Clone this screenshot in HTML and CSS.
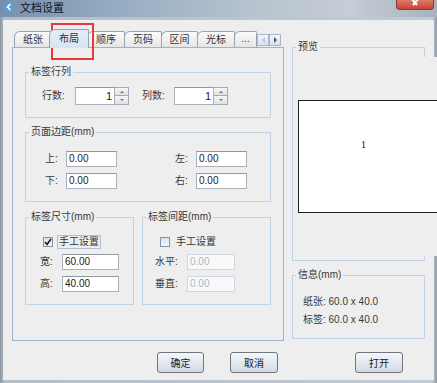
FILE: index.html
```html
<!DOCTYPE html>
<html lang="zh-CN">
<head>
    <meta charset="UTF-8">
    <meta name="viewport" content="width=device-width, initial-scale=1.0">
    <title>文档设置</title>
    <link rel="stylesheet" href="styles.css">
</head>
<body>

<div class="window">
    <div class="titlebar">
        <svg class="app-icon" width="12" height="12" viewBox="0 0 12 12">
            <path d="M6 0.5 L11.5 6 L6 11.5 L0.5 6 Z" fill="#4fa3e3"/>
            <path d="M7.5 3 L4.5 6 L7.5 9" stroke="#fff" stroke-width="1.6" fill="none"/>
        </svg>
        <span class="title">文档设置</span>
        <div class="close-btn">
            <svg width="12" height="10" viewBox="0 0 12 10">
                <path d="M2 -2 L8 5 M10 -2 L4 5" stroke="#fff" stroke-width="2"/>
            </svg>
        </div>
    </div>

    <div class="client">
        <div class="main">
            <div class="tabs">
                <div class="tab-strip">
                    <div class="tab">纸张</div>
                    <div class="tab selected">布局</div>
                    <div class="tab">顺序</div>
                    <div class="tab">页码</div>
                    <div class="tab narrow">区间</div>
                    <div class="tab">光标</div>
                    <div class="tab more">...</div>
                    <div class="tab-scroll">
                        <span class="scroll-btn"><i class="tri tri-left"></i></span>
                        <span class="scroll-btn"><i class="tri tri-right"></i></span>
                    </div>
                </div>

                <div class="tab-panel">
                    <fieldset class="group rows-group">
                        <legend>标签行列</legend>
                        <div class="spin-row">
                            <span class="lbl lbl-rows">行数:</span>
                            <div class="spinner">
                                <span class="field num">1</span>
                                <span class="spin-btns">
                                    <span class="spin-btn"><i class="tri tri-up"></i></span>
                                    <span class="spin-btn"><i class="tri tri-down"></i></span>
                                </span>
                            </div>
                            <span class="lbl lbl-cols">列数:</span>
                            <div class="spinner">
                                <span class="field num">1</span>
                                <span class="spin-btns">
                                    <span class="spin-btn"><i class="tri tri-up"></i></span>
                                    <span class="spin-btn"><i class="tri tri-down"></i></span>
                                </span>
                            </div>
                        </div>
                    </fieldset>

                    <fieldset class="group margins-group">
                        <legend>页面边距(mm)</legend>
                        <div class="margin-row first">
                            <div class="pair"><span class="lbl lbl-side">上:</span><span class="field w50">0.00</span></div>
                            <div class="pair"><span class="lbl lbl-side">左:</span><span class="field w50">0.00</span></div>
                        </div>
                        <div class="margin-row">
                            <div class="pair"><span class="lbl lbl-side">下:</span><span class="field w50">0.00</span></div>
                            <div class="pair"><span class="lbl lbl-side">右:</span><span class="field w50">0.00</span></div>
                        </div>
                    </fieldset>

                    <div class="group-pair">
                        <fieldset class="group size-group">
                            <legend>标签尺寸(mm)</legend>
                            <div class="check-row">
                                <span class="checkbox">
                                    <svg width="8" height="8" viewBox="0 0 8 8">
                                        <path d="M1 4 L3 6.5 L7 1" stroke="#1a1a1a" stroke-width="1.6" fill="none"/>
                                    </svg>
                                </span>
                                <span class="check-label focused">手工设置</span>
                            </div>
                            <div class="field-row first">
                                <span class="lbl lbl-size">宽:</span><span class="field w57">60.00</span>
                            </div>
                            <div class="field-row">
                                <span class="lbl lbl-size">高:</span><span class="field w57">40.00</span>
                            </div>
                        </fieldset>

                        <fieldset class="group gap-group">
                            <legend>标签间距(mm)</legend>
                            <div class="check-row">
                                <span class="checkbox"></span>
                                <span class="check-label">手工设置</span>
                            </div>
                            <div class="field-row first">
                                <span class="lbl lbl-gap">水平:</span><span class="field w48 disabled">0.00</span>
                            </div>
                            <div class="field-row">
                                <span class="lbl lbl-gap">垂直:</span><span class="field w48 disabled">0.00</span>
                            </div>
                        </fieldset>
                    </div>
                </div>
            </div>

            <div class="side">
                <fieldset class="group preview-group">
                    <legend>预览</legend>
                    <div class="canvas">
                        <div class="label-sheet">1</div>
                    </div>
                </fieldset>

                <fieldset class="group info-group">
                    <legend>信息(mm)</legend>
                    <div class="info-line first">纸张: 60.0 x 40.0</div>
                    <div class="info-line">标签: 60.0 x 40.0</div>
                </fieldset>
            </div>
        </div>

        <div class="buttons">
            <button class="btn btn-ok">确定</button>
            <button class="btn btn-cancel">取消</button>
            <button class="btn btn-open">打开</button>
        </div>
    </div>
</div>

<div class="highlight"></div>

</body>
</html>
```

FILE: styles.css
```css
html, body {
    margin: 0;
    padding: 0;
}

body {
    width: 437px;
    height: 383px;
    overflow: hidden;
    position: relative;
    font-family: "Liberation Sans", "Noto Sans CJK SC", sans-serif;
    font-size: 10px;
    color: #333333;
}

.window {
    height: 383px;
    box-sizing: border-box;
    padding: 0 3px 3px 3px;
    background: linear-gradient(to right, #8c97a3, #b4bec9 1%, #c2cad3 99%, #8c97a3);
    display: flex;
    flex-direction: column;
}

/* title bar */
.titlebar {
    height: 17px;
    margin: 0 -3px 3px -3px;
    display: flex;
    align-items: flex-start;
    background: linear-gradient(to right, #7890ad, #9aafc4 30%, #b9c4cf 60%, #c5cdd6 80%, #a5b2bf);
}

.app-icon {
    margin: 1px 0 0 3px;
}

.title {
    margin-left: 5px;
    font-family: "Noto Sans CJK SC", sans-serif;
    font-size: 11px;
    line-height: 14px;
    color: #111111;
}

.close-btn {
    margin-left: auto;
    margin-right: 3px;
    width: 36px;
    height: 9px;
    border: 1px solid #8a3a34;
    border-top: none;
    border-radius: 0 0 4px 4px;
    background: linear-gradient(#e07a6c, #c94331);
    display: flex;
    justify-content: center;
}

/* client area */
.client {
    flex: 1;
    background: #eeeeee;
    padding: 8px 0 0 9px;
}

.main {
    display: flex;
    align-items: flex-start;
    gap: 8px;
}

.tabs {
    width: 272px;
}

.tab-strip {
    height: 19px;
    display: flex;
    align-items: flex-end;
    padding-left: 2px;
}

.tab {
    width: 38px;
    height: 16px;
    box-sizing: border-box;
    border: 1px solid #98a4b2;
    border-bottom: none;
    border-radius: 6px 2px 0 0;
    background: linear-gradient(#fbfbfb, #e6e6e6);
    text-align: center;
    line-height: 15px;
    color: #333333;
    margin-right: -1px;
}

.tab.selected {
    width: 40px;
    height: 19px;
    margin: 0 -2px -1px -2px;
    position: relative;
    z-index: 1;
    border-color: #8fa4be;
    background: linear-gradient(#e3edf8, #d6e4f3);
    line-height: 17px;
}

.tab.narrow {
    width: 37px;
}

.tab.more {
    width: 23px;
    line-height: 14px;
}

.tab-scroll {
    display: flex;
    margin: 0 0 1px 1px;
}

.scroll-btn {
    width: 12px;
    height: 12px;
    box-sizing: border-box;
    border: 1px solid #aab7c6;
    background: linear-gradient(#f3f7fb, #d7e2ee);
    display: flex;
    align-items: center;
    justify-content: center;
}

.tri {
    width: 0;
    height: 0;
    display: block;
}

.tri-left {
    border-top: 3px solid transparent;
    border-bottom: 3px solid transparent;
    border-right: 3px solid #b7c5d4;
}

.tri-right {
    border-top: 3px solid transparent;
    border-bottom: 3px solid transparent;
    border-left: 3px solid #4d5866;
}

.tri-up {
    border-left: 2px solid transparent;
    border-right: 2px solid transparent;
    border-bottom: 2px solid #6b7580;
}

.tri-down {
    border-left: 2px solid transparent;
    border-right: 2px solid transparent;
    border-top: 2px solid #6b7580;
}

.tab-panel {
    height: 294px;
    box-sizing: border-box;
    border: 1px solid #9db3cd;
    background: #eeeeee;
    padding: 0 12px;
}

/* group boxes */
.group {
    margin: 0;
    padding: 0;
    border: 1px solid #c1d2e5;
    min-width: 0;
}

.group legend {
    margin-left: 3px;
    padding: 0 2px;
    font-size: 10px;
    line-height: 12px;
    color: #3a3a3a;
}

.rows-group {
    margin-top: 18px;
}

.margins-group {
    margin-top: 8px;
}

.lbl {
    color: #3a3a3a;
    line-height: 16px;
}

.field {
    height: 16px;
    box-sizing: border-box;
    border: 1px solid #a8b2bd;
    border-top-color: #8f99a4;
    background: #ffffff;
    padding: 0 2px;
    font-size: 10px;
    line-height: 14px;
    color: #222222;
}

.field.disabled {
    border-color: #cdd8e4;
    background: #f9f9f9;
    color: #a9bacd;
}

.w50 { width: 51px; }
.w57 { width: 57px; }
.w48 { width: 48px; }

/* rows / columns spinners */
.spin-row {
    display: flex;
    align-items: center;
    margin-top: 9px;
    padding-bottom: 12px;
}

.lbl-rows {
    margin-left: 16px;
    width: 33px;
}

.lbl-cols {
    margin-left: 13px;
    width: 32px;
}

.spinner {
    display: flex;
    height: 18px;
}

.spinner .field {
    width: 40px;
    height: 18px;
    line-height: 16px;
    text-align: right;
    font-size: 11px;
}

.spin-btns {
    display: flex;
    flex-direction: column;
}

.spin-btn {
    width: 14px;
    height: 9px;
    box-sizing: border-box;
    border: 1px solid #a3acb6;
    border-left: none;
    background: linear-gradient(#f6f6f6, #e1e1e1);
    display: flex;
    align-items: center;
    justify-content: center;
}

.spin-btn + .spin-btn {
    border-top: none;
}

/* page margins */
.margin-row {
    display: flex;
    justify-content: space-between;
    padding: 0 23px 0 19px;
    margin-top: 6px;
}

.margin-row.first {
    margin-top: 13px;
}

.margin-row:last-child {
    padding-bottom: 12px;
}

.pair {
    display: flex;
    align-items: center;
}

.lbl-side {
    width: 21px;
}

/* size / gap groups */
.group-pair {
    display: flex;
    gap: 8px;
    margin-top: 9px;
}

.group-pair .group {
    padding-bottom: 12px;
}

.size-group {
    width: 109px;
    box-sizing: border-box;
}

.gap-group {
    width: 129px;
    box-sizing: border-box;
}

.check-row {
    display: flex;
    align-items: center;
    height: 14px;
    margin-top: 12px;
    padding-left: 17px;
}

.checkbox {
    width: 10px;
    height: 10px;
    box-sizing: border-box;
    border: 1px solid #8293a8;
    background: linear-gradient(#d9e1ea, #f5f7fa);
    display: flex;
    align-items: center;
    justify-content: center;
}

.check-label {
    margin-left: 4px;
    padding: 0 1px;
    line-height: 12px;
    border: 1px solid transparent;
    color: #333333;
}

.check-label.focused {
    border-color: #b1bfcf;
}

.field-row {
    display: flex;
    align-items: center;
    margin-top: 6px;
}

.field-row.first {
    margin-top: 5px;
}

.lbl-size {
    margin-left: 14px;
    width: 22px;
}

.lbl-gap {
    margin-left: 12px;
    width: 32px;
}

/* right column */
.side {
    width: 133px;
    margin-top: 13px;
}

.preview-group {
    height: 220px;
    box-sizing: border-box;
}

.canvas {
    margin-top: 4px;
    width: 150px;
    height: 199px;
    box-sizing: border-box;
    background: #eeeeee;
    padding: 43px 0 0 5px;
}

.label-sheet {
    width: 150px;
    height: 113px;
    box-sizing: border-box;
    border: 1px solid #1e1e1e;
    background: #ffffff;
    padding: 38px 0 0 62px;
    font-family: "Liberation Serif", serif;
    font-size: 10px;
    line-height: 12px;
    color: #111111;
}

.info-group {
    margin-top: 8px;
    padding-bottom: 9px;
}

.info-line {
    padding-left: 10px;
    line-height: 18px;
    color: #3a3a3a;
}

.info-line.first {
    margin-top: 12px;
}

/* dialog buttons */
.buttons {
    display: flex;
    margin-top: 11px;
}

.btn {
    height: 21px;
    width: 47px;
    padding: 0;
    border: 1px solid #70767d;
    border-radius: 3px;
    background: linear-gradient(#f4f6f8, #e3e9f0 50%, #cfdae7);
    font-family: "Liberation Sans", "Noto Sans CJK SC", sans-serif;
    font-size: 10px;
    color: #222222;
}

.btn-ok {
    margin-left: 145px;
}

.btn-cancel {
    margin-left: 26px;
    width: 48px;
}

.btn-open {
    margin-left: 77px;
    width: 48px;
}

/* annotation around the active tab */
.highlight {
    position: absolute;
    left: 51px;
    top: 23px;
    width: 43px;
    height: 37px;
    box-sizing: border-box;
    border: 2px solid #e8383d;
}
```
